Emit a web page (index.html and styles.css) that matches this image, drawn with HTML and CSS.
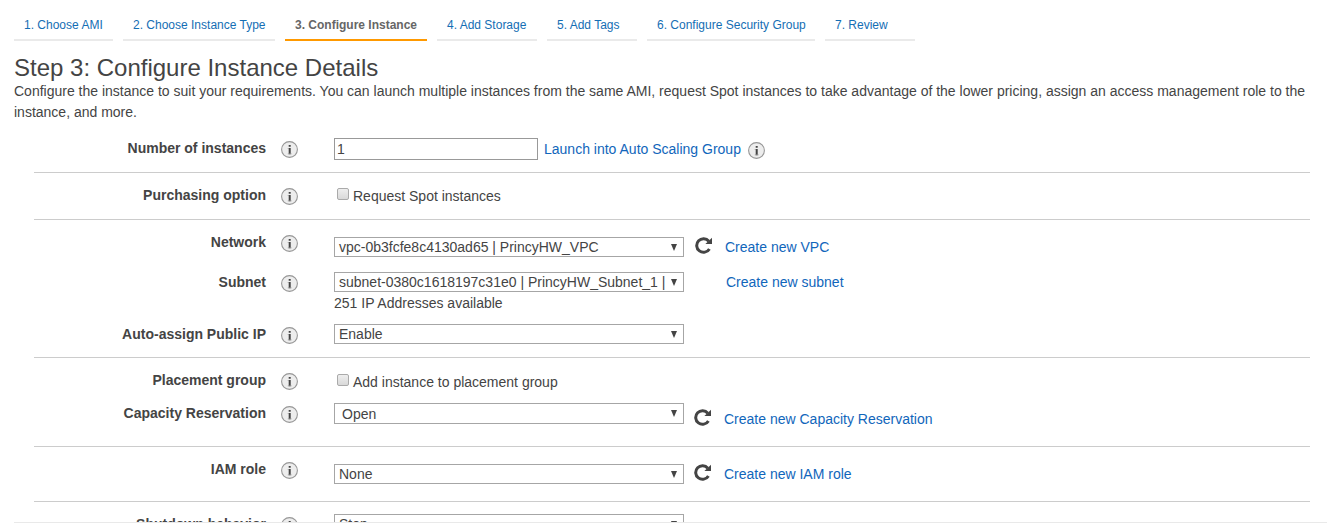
FILE: index.html
```html
<!DOCTYPE html>
<html lang="en">
<head>
<meta charset="utf-8">
<title>Configure Instance Details</title>
<link rel="stylesheet" href="styles.css">
</head>
<body>
<svg class="defs" width="0" height="0" aria-hidden="true">
  <symbol id="info" viewBox="0 0 17 17">
    <circle cx="8.5" cy="8.5" r="7.9" fill="#ededed" stroke="#979797" stroke-width="1.1"/>
    <path d="M7.7 4h2v1.8h-2zM7.7 7h2v6.2h-2z" fill="#444"/>
    <path d="M6.8 7h.9v1h-.9zM6.8 12.4h3.8v.8H6.8z" fill="#999"/>
  </symbol>
  <symbol id="refresh" viewBox="0 0 17 17">
    <path d="M13.8 4.2A6.8 6.8 0 1 0 14.4 11.9" fill="none" stroke="#444" stroke-width="3"/>
    <path d="M17 .8V7H10.4z" fill="#444"/>
  </symbol>
</svg>
<nav class="tabs">
  <a class="tab t1">1. Choose AMI</a>
  <a class="tab t2">2. Choose Instance Type</a>
  <a class="tab t3 active">3. Configure Instance</a>
  <a class="tab t4">4. Add Storage</a>
  <a class="tab t5">5. Add Tags</a>
  <a class="tab t6">6. Configure Security Group</a>
  <a class="tab t7">7. Review</a>
</nav>
<header class="intro">
  <h1>Step 3: Configure Instance Details</h1>
  <p>Configure the instance to suit your requirements. You can launch multiple instances from the same AMI, request Spot instances to take advantage of the lower pricing, assign an access management role to the instance, and more.</p>
</header>
<main class="form">
  <section class="group single">
    <div class="row">
      <label>Number of instances</label><svg class="info"><use href="#info"/></svg>
      <div class="field"><div class="input">1</div><a class="link launch">Launch into Auto Scaling Group</a><svg class="info inline"><use href="#info"/></svg></div>
    </div>
  </section>
  <section class="group single">
    <div class="row">
      <label>Purchasing option</label><svg class="info"><use href="#info"/></svg>
      <div class="field"><span class="check"></span><span class="text">Request Spot instances</span></div>
    </div>
  </section>
  <section class="group network">
    <div class="row">
      <label>Network</label><svg class="info"><use href="#info"/></svg>
      <div class="field lowered"><div class="select"><span>vpc-0b3fcfe8c4130ad65 | PrincyHW_VPC</span></div><svg class="refresh vpc"><use href="#refresh"/></svg><a class="link">Create new VPC</a></div>
    </div>
    <div class="row">
      <label>Subnet</label><svg class="info"><use href="#info"/></svg>
      <div class="stack">
        <div class="field"><div class="select"><span>subnet-0380c1618197c31e0 | PrincyHW_Subnet_1 |</span></div><a class="link subnet">Create new subnet</a></div>
        <div class="hint">251 IP Addresses available</div>
      </div>
    </div>
    <div class="row">
      <label>Auto-assign Public IP</label><svg class="info"><use href="#info"/></svg>
      <div class="field"><div class="select"><span>Enable</span></div></div>
    </div>
  </section>
  <section class="group placement">
    <div class="row">
      <label>Placement group</label><svg class="info"><use href="#info"/></svg>
      <div class="field"><span class="check"></span><span class="text">Add instance to placement group</span></div>
    </div>
    <div class="row">
      <label>Capacity Reservation</label><svg class="info"><use href="#info"/></svg>
      <div class="field"><div class="select tall"><span>Open</span></div><svg class="refresh low"><use href="#refresh"/></svg><a class="link low">Create new Capacity Reservation</a></div>
    </div>
  </section>
  <section class="group iam">
    <div class="row">
      <label>IAM role</label><svg class="info"><use href="#info"/></svg>
      <div class="field lowered"><div class="select"><span>None</span></div><svg class="refresh"><use href="#refresh"/></svg><a class="link">Create new IAM role</a></div>
    </div>
  </section>
  <section class="group last">
    <div class="row">
      <label>Shutdown behavior</label><svg class="info"><use href="#info"/></svg>
      <div class="field"><div class="select"><span>Stop</span></div></div>
    </div>
  </section>
</main>
<footer class="foot"></footer>
</body>
</html>
```
FILE: styles.css
```css
* { box-sizing: border-box; }
html, body { height: 525px; overflow: hidden; }
body { margin: 0; background: #fff; color: #444; font: 14px/20px "Liberation Sans", Arial, sans-serif; }
.defs { display: block; }
.tabs { display: flex; gap: 10px; padding: 10px 0 0 14px; height: 41px; }
.tab { height: 31px; padding: 5px 0 0 10px; font-size: 12px; color: #146eb4; border-bottom: 2px solid #eaeaea; white-space: nowrap; }
.tab.active { color: #666; font-weight: bold; border-color: #f90; }
.t1 { width: 99px; }
.t2 { width: 152px; }
.t3 { width: 142px; }
.t4 { width: 100px; }
.t5, .t7 { width: 90px; }
.t6 { width: 168px; }
.intro { height: 85px; padding: 13px 14px 0; }
h1 { margin: 0; font-size: 24px; line-height: 27px; font-weight: normal; }
.intro p { margin: 0; line-height: 21px; }
.form { margin: 0 17px 0 34px; }
.group { padding-top: 12px; border-bottom: 1px solid #ccc; }
.single { height: 47px; }
.network { height: 138px; display: grid; grid-template-rows: 40px 52px 33px; }
.placement { height: 89px; display: grid; grid-template-rows: 33px 43px; }
.iam { height: 55px; }
.last { height: 20px; overflow: hidden; border: 0; }
.row { display: grid; grid-template-columns: 232px 15px 53px 1fr; align-items: start; }
label { font-weight: bold; text-align: right; white-space: nowrap; }
.info { display: block; grid-column: 3; width: 17px; height: 17px; margin-top: 3px; }
.field { display: flex; align-items: flex-start; white-space: nowrap; }
.lowered { margin-top: 5px; }
.input { width: 204px; height: 22px; border: 1px solid #999; padding-left: 2px; line-height: 21px; }
.launch { margin: 1px 0 0 6px; }
.info.inline { margin: 4px 0 0 7px; }
.link { color: #1166bb; }
.check { width: 12px; height: 12px; margin: 3px 4px 0 3px; border: 1px solid #aaa; border-radius: 2px; background: linear-gradient(#eee, #d9d9d9); }
.text { margin-top: 1px; }
.placement .check { margin-top: 4px; }
.placement .text { margin-top: 2px; }
.select { display: flex; justify-content: space-between; width: 350px; height: 20px; border: 1px solid #a6a6a6; padding-left: 4px; line-height: 19px; }
.select::after { content: ""; width: 6px; height: 7px; margin: 6px 6px 0 0; background: #444; clip-path: polygon(0 0, 100% 0, 50% 100%); }
.select.tall { height: 21px; padding-left: 7px; line-height: 20px; }
.refresh { width: 17px; height: 17px; margin: 0 13px 0 10px; }
.refresh.vpc { margin-left: 11px; }
.refresh.low { margin-top: 6px; }
.link.low { margin-top: 6px; }
.link.subnet { margin-left: 42px; }
.hint { line-height: 22px; }
.foot { height: 1px; margin-left: 14px; background: #e9e9e9; }
```
